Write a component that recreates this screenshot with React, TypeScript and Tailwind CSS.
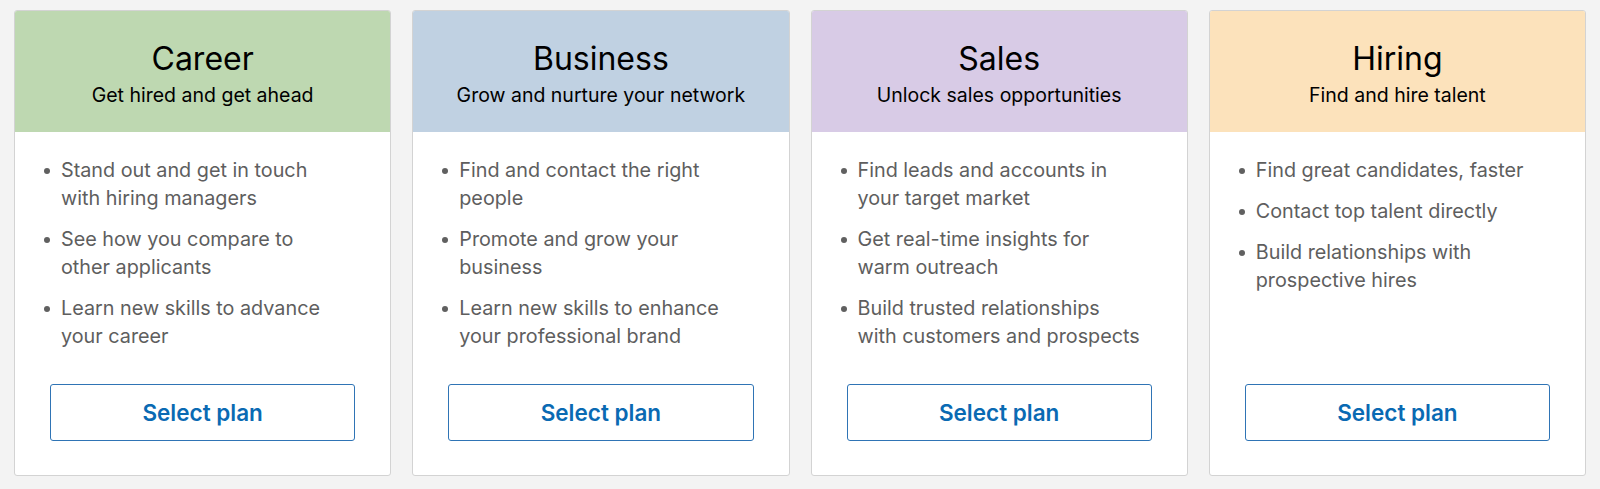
const plans = [
  {
    title: "Career",
    subtitle: "Get hired and get ahead",
    color: "bg-[#bed8b1]",
    points: [
      "Stand out and get in touch with hiring managers",
      "See how you compare to other applicants",
      "Learn new skills to advance your career",
    ],
  },
  {
    title: "Business",
    subtitle: "Grow and nurture your network",
    color: "bg-[#c0d1e2]",
    points: [
      "Find and contact the right people",
      "Promote and grow your business",
      "Learn new skills to enhance your professional brand",
    ],
  },
  {
    title: "Sales",
    subtitle: "Unlock sales opportunities",
    color: "bg-[#d8cbe6]",
    points: [
      "Find leads and accounts in your target market",
      "Get real-time insights for warm outreach",
      "Build trusted relationships with customers and prospects",
    ],
  },
  {
    title: "Hiring",
    subtitle: "Find and hire talent",
    color: "bg-[#fce2bb]",
    points: [
      "Find great candidates, faster",
      "Contact top talent directly",
      "Build relationships with prospective hires",
    ],
  },
];

const PlanCard = ({ plan }: { plan: (typeof plans)[number] }) => {
  return (
    <div className="flex flex-col overflow-hidden rounded-[3px] border border-[#d3d3d3] bg-white">
      <div className={`${plan.color} px-4 pt-[28px] pb-[24px] text-center text-black`}>
        <h2 className="text-[32px] leading-[40px]">{plan.title}</h2>
        <p className="mt-[3px] text-[19.5px] leading-[26px]">{plan.subtitle}</p>
      </div>
      <ul className="flex flex-col gap-[12.5px] pt-[24px] pr-[44px] pl-[29px] text-[19.8px] leading-[28.3px] text-[#5e5e5e]">
        {plan.points.map((point) => (
          <li key={point} className="flex items-start">
            <span className="mt-[12px] mr-[11px] h-[6px] w-[6px] shrink-0 rounded-full bg-[#606060]" />
            <span>{point}</span>
          </li>
        ))}
      </ul>
      <div className="mt-auto flex justify-center px-[35px] pb-[34px]">
        <button className="h-[57px] w-full rounded-[3px] border border-[#2f74b5] bg-white text-[22.5px] font-semibold text-[#0a6ab3]">
          Select plan
        </button>
      </div>
    </div>
  );
};

export default function App() {
  return (
    <div className="min-h-[489px] bg-[#f3f3f3] px-[14px] pt-[10px] pb-[12px] font-['Inter',sans-serif]">
      <div className="grid h-[466px] grid-cols-4 gap-[21px]">
        {plans.map((plan) => (
          <PlanCard key={plan.title} plan={plan} />
        ))}
      </div>
    </div>
  );
}
